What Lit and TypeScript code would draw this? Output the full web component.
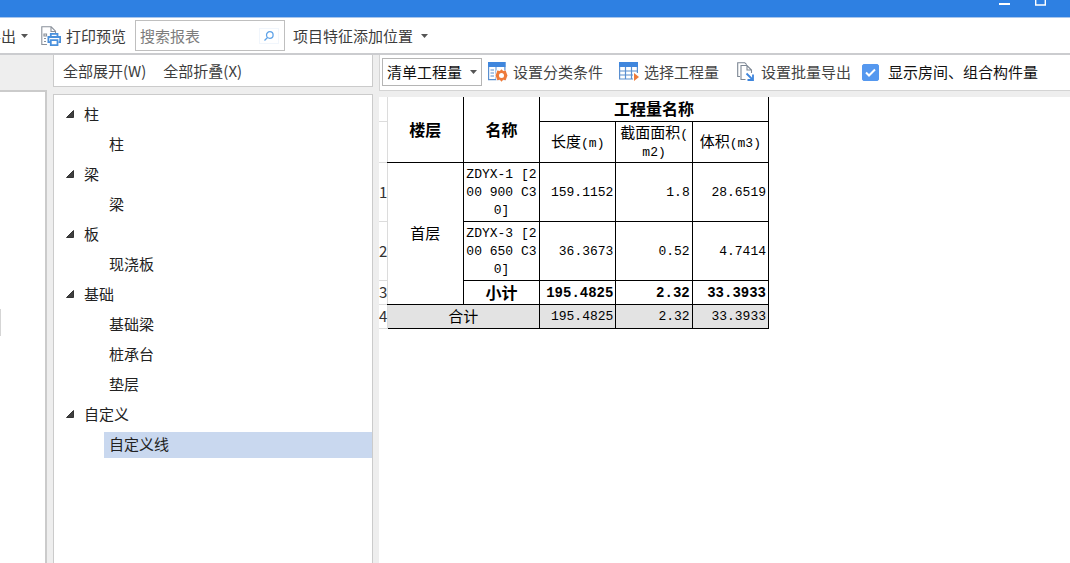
import { LitElement, html, css } from "lit";
import { customElement, state } from "lit/decorators.js";
import { classMap } from "lit/directives/class-map.js";

interface Group {
  name: string;
  items: string[];
}

const GROUPS: Group[] = [
  { name: "柱", items: ["柱"] },
  { name: "梁", items: ["梁"] },
  { name: "板", items: ["现浇板"] },
  { name: "基础", items: ["基础梁", "桩承台", "垫层"] },
  { name: "自定义", items: ["自定义线"] },
];

const caret = html`<svg class="caret" width="7" height="4" viewBox="0 0 7 4" aria-hidden="true">
  <path d="M0 0h7L3.5 4z" fill="#555" />
</svg>`;

const printIcon = html`<svg width="20" height="20" viewBox="0 0 20 20" fill="none" aria-hidden="true">
  <path d="M6 18.5H.8V.8h9.400l4.300 4.400V7M10 1v4.500h4.300" stroke="#8a919b" stroke-width="1.100" />
  <path d="M3 8h2.500v2H3zM3 12.500h2M3 15.500h2" stroke="#8a919b" stroke-width="1.200" />
  <path d="M9.800 11V7.800h6.700V11M9 16.200H7.400V11h11.800v5.200h-1.700" stroke="#4a90dc" stroke-width="1.800" />
  <path d="M9.800 14.200h6.700v4.900H9.800z" fill="#fff" stroke="#4a90dc" stroke-width="1.800" />
</svg>`;

const conditionIcon = html`<svg width="20" height="20" viewBox="0 0 20 20" fill="none" aria-hidden="true">
  <path d="M.6.600h16.300v17H.6z" fill="#fff" stroke="#5a8fd0" stroke-width="1.200" />
  <path d="M0 0h17.500v5H0z" fill="#3f86dd" />
  <path d="M2.500 8h3.500M2.500 11h3.500M2.500 14h3.500" stroke="#5a8fd0" stroke-width="1.200" />
  <path d="M8 5v12.500" stroke="#5a8fd0" />
  <path d="M13.500 6.500l2.200 1.900 3-.2.300 2.900 1 2.400-1 2.400-.3 2.900-3-.2-2.200 1.400-2.200-1.400-3 .2-.3-2.900-1-2.400 1-2.400.3-2.900 3 .2z" fill="#fff" />
  <path d="M13.500 7.200l1.700 1.900 2.500-.5.800 2.500 1 2.400-1 2.400-.8 2.400-2.500-.5-1.700 1.900-1.700-1.900-2.500.5-.8-2.400-1-2.400 1-2.400.8-2.500 2.500.5z" fill="#ee7b3b" />
  <circle cx="13.500" cy="13.500" r="2.500" fill="#fff" />
</svg>`;

const gridIcon = html`<svg width="20" height="20" viewBox="0 0 20 20" fill="none" aria-hidden="true">
  <path d="M.6 1h17.800v16H.6zM6.500 5v12M12.500 5v12M.6 9h17.800M.6 13h17.800" stroke="#5a8fd0" stroke-width="1.200" />
  <path d="M0 0h19v5H0z" fill="#3f86dd" />
  <path d="M14 11h6v8h-6z" fill="#fff" />
  <path d="M15 11l5 4-5 4z" fill="#ee7b3b" />
</svg>`;

const exportIcon = html`<svg width="17" height="20" viewBox="0 0 17 20" fill="none" aria-hidden="true">
  <path d="M3 14.500H.7V.7h7l2 2" stroke="#7d8794" stroke-width="1.100" />
  <path d="M8.500 17.500H4V3.500h6l4.500 4.500v3M10 3.500V8h4.500" stroke="#7d8794" stroke-width="1.100" />
  <path d="M9.500 11.500l5.500 5.500M16 12.500V18h-5.500" stroke="#3f86dd" stroke-width="1.800" />
</svg>`;

@customElement("app-root")
export class AppRoot extends LitElement {
  static styles = css`
    :host {
      display: flex;
      flex-direction: column;
      height: 100vh;
      overflow: hidden;
      background: #eeeeee;
      color: #222;
      font: 15px/20px "Noto Sans CJK SC", sans-serif;
    }
    * {
      box-sizing: border-box;
    }
    button,
    input,
    select {
      font: inherit;
      color: inherit;
      margin: 0;
      padding: 0;
      border: 0;
      border-radius: 0;
      background: none;
    }
    svg {
      display: block;
      flex: none;
    }
    .titlebar {
      display: flex;
      flex: none;
      justify-content: flex-end;
      align-items: flex-start;
      gap: 25px;
      height: 18px;
      padding-right: 24px;
      background: #2e80e2;
      border-bottom: 1px solid #a9c6ec;
    }
    .toolbar {
      display: flex;
      flex: none;
      align-items: center;
      height: 37px;
      color: #3c3c3c;
      background: #fff;
      border-bottom: 2px solid #cbcccf;
      white-space: nowrap;
    }
    .tool {
      display: flex;
      align-items: center;
      gap: 5px;
      white-space: nowrap;
    }
    .export {
      justify-content: flex-end;
      width: 28px;
      overflow: hidden;
    }
    .print {
      margin-left: 13px;
    }
    .search {
      display: flex;
      align-items: center;
      width: 150px;
      height: 31px;
      margin: 0 8px 0 9px;
      padding: 0 5px 0 4px;
      border: 1px solid #bfbfbf;
    }
    .search input {
      flex: 1;
      min-width: 0;
      outline: none;
    }
    .search input::placeholder {
      color: #7d7d7d;
      opacity: 1;
    }
    .find {
      padding: 2px 4px;
      border: 1px solid #f1f6fc;
    }
    .position {
      gap: 8px;
    }
    .work {
      display: flex;
      flex: 1;
      min-height: 0;
    }
    .side {
      width: 47px;
      flex: none;
      margin-top: 35px;
      background: #fff;
      border: 2px solid #cbcbcb;
      border-width: 2px 2px 0 0;
    }
    .handle {
      width: 1px;
      height: 27px;
      margin-top: 217px;
      background: #d5d5d5;
    }
    .nav {
      display: flex;
      flex-direction: column;
      flex: none;
      gap: 7px;
      width: 320px;
      margin: 0 6px;
    }
    .folds {
      display: flex;
      align-items: center;
      gap: 17px;
      height: 32px;
      padding-left: 9px;
      color: #3c3c3c;
      background: #fff;
      border: 1px solid #cbcbcb;
      border-top: 0;
    }
    .tree {
      flex: 1;
      padding-top: 5px;
      background: #fff;
      border: 1px solid #cbcbcb;
      border-bottom: 0;
    }
    .tree ul {
      list-style: none;
      margin: 0;
      padding: 0;
    }
    .group {
      display: flex;
      align-items: center;
      gap: 10px;
      height: 30px;
      padding: 0 0 2px 12px;
    }
    .shut svg {
      transform: rotate(-45deg);
    }
    .row {
      padding: 2px 0 2px 50px;
    }
    .leaf {
      display: block;
      width: 100%;
      height: 26px;
      padding: 0 0 2px 5px;
      text-align: left;
    }
    .picked {
      background: #c9d8ef;
    }
    .main {
      display: flex;
      flex-direction: column;
      flex: 1;
      min-width: 0;
      gap: 6px;
    }
    .options {
      display: flex;
      align-items: center;
      height: 36px;
      padding: 0 0 1px 2px;
      color: #444;
      background: #fff;
      border: 1px solid #d4d4d4;
      border-width: 0 0 1px 1px;
      white-space: nowrap;
      overflow: hidden;
    }
    .picker {
      display: grid;
      align-items: center;
      width: 100px;
      margin-right: 6px;
      color: #111;
    }
    .picker select {
      grid-area: 1 / 1;
      height: 28px;
      padding-left: 4px;
      appearance: none;
      border: 1px solid #b5b5b5;
    }
    .picker svg {
      grid-area: 1 / 1;
      justify-self: end;
      margin-right: 5px;
      pointer-events: none;
    }
    .options .tool {
      margin-right: 16px;
    }
    .options .batch {
      gap: 7px;
      margin: 0 11px 0 2px;
    }
    .check {
      display: flex;
      align-items: center;
      gap: 9px;
      color: #111;
    }
    .check input {
      width: 17px;
      height: 17px;
      appearance: none;
      border: 1px solid #5598ef;
      border-radius: 2px;
      background: #fff;
    }
    .check input:checked {
      background: #5598ef
        url("data:image/svg+xml,%3Csvg xmlns='http://www.w3.org/2000/svg' viewBox='0 0 15 15'%3E%3Cpath d='M3 7.500l3 3 6-6' fill='none' stroke='white' stroke-width='2'/%3E%3C/svg%3E");
    }
    .report {
      flex: 1;
      background: #fff;
      overflow: hidden;
    }
    table {
      table-layout: fixed;
      width: 390px;
      border-collapse: collapse;
      color: #000;
      font: 13px/18px "Liberation Mono", "Noto Sans CJK SC", monospace;
    }
    .numcol {
      width: 8px;
    }
    td,
    th {
      height: 24px;
      padding: 3px 2px 1px;
      border: 1px solid #000;
      font-weight: 400;
      text-align: center;
      line-break: anywhere;
    }
    tr:first-child > .top {
      border-top: 0;
    }
    .num {
      padding: 0;
      border: 1px solid #dcdcdc;
      border-left: 0;
      font: 15px/18px "Noto Sans CJK SC", sans-serif;
      color: #333;
    }
    .edge {
      border-left-color: #dcdcdc;
    }
    .head {
      padding: 5px 2px 0;
      font-size: 16px;
      font-weight: 700;
    }
    .cjk {
      padding: 5px 2px 0;
      font-size: 15px;
    }
    .unit {
      height: 41px;
      padding: 4px 2px 0;
      font-size: 15px;
    }
    .latin {
      font-size: 13px;
    }
    .value {
      text-align: right;
    }
    .strong {
      font-size: 14px;
      font-weight: 700;
    }
    .total > .fill {
      background: #e3e3e3;
    }
  `;

  @state() private picked = "自定义线";
  @state() private closed = new Set<string>();

  private foldAll(close: boolean) {
    this.closed = new Set(close ? GROUPS.map((g) => g.name) : []);
  }

  private toggle(name: string) {
    const next = new Set(this.closed);
    next.has(name) ? next.delete(name) : next.add(name);
    this.closed = next;
  }

  private renderGroup(group: Group) {
    const shut = this.closed.has(group.name);
    return html`<li>
      <button
        class=${classMap({ group: true, shut })}
        aria-expanded=${String(!shut)}
        @click=${() => this.toggle(group.name)}
      >
        <svg width="8" height="8" viewBox="0 0 8 8" aria-hidden="true"><path d="M7.500 .5v7h-7z" fill="#404040" stroke="#333" /></svg>
        ${group.name}
      </button>
      ${shut
        ? null
        : html`<ul>
            ${group.items.map(
              (item) => html`<li class="row">
                <button
                  class=${classMap({ leaf: true, picked: item === this.picked })}
                  @click=${() => (this.picked = item)}
                >
                  ${item}
                </button>
              </li>`,
            )}
          </ul>`}
    </li>`;
  }

  private renderTable() {
    return html`<table>
      <colgroup>
        <col class="numcol" />
        <col /><col /><col /><col /><col />
      </colgroup>
      <thead>
        <tr>
          <td class="num top"></td>
          <th class="head top edge" rowspan="2">楼层</th>
          <th class="head top" rowspan="2">名称</th>
          <th class="head top" colspan="3">工程量名称</th>
        </tr>
        <tr>
          <td class="num"></td>
          <th class="unit">长度<span class="latin">(m)</span></th>
          <th class="unit">截面面积<span class="latin">(m2)</span></th>
          <th class="unit">体积<span class="latin">(m3)</span></th>
        </tr>
      </thead>
      <tbody>
        <tr>
          <th class="num">1</th>
          <th class="cjk edge" rowspan="3">首层</th>
          <td>ZDYX-1 [200 900 C30]</td>
          <td class="value">159.1152</td>
          <td class="value">1.8</td>
          <td class="value">28.6519</td>
        </tr>
        <tr>
          <th class="num">2</th>
          <td>ZDYX-3 [200 650 C30]</td>
          <td class="value">36.3673</td>
          <td class="value">0.52</td>
          <td class="value">4.7414</td>
        </tr>
        <tr>
          <th class="num">3</th>
          <th class="head">小计</th>
          <td class="value strong">195.4825</td>
          <td class="value strong">2.32</td>
          <td class="value strong">33.3933</td>
        </tr>
        <tr class="total">
          <th class="num">4</th>
          <th class="cjk edge fill" colspan="2">合计</th>
          <td class="value fill">195.4825</td>
          <td class="value fill">2.32</td>
          <td class="value fill">33.3933</td>
        </tr>
      </tbody>
    </table>`;
  }

  render() {
    return html`
      <header class="titlebar">
        <button aria-label="最小化">
          <svg width="11" height="6" viewBox="0 0 11 6"><path d="M0 4h11" stroke="#fff" stroke-width="2" /></svg>
        </button>
        <button aria-label="最大化">
          <svg width="11" height="6" viewBox="0 0 11 6"><path d="M.7-4v9h9.600v-9z" fill="none" stroke="#fff" stroke-width="1.400" /></svg>
        </button>
      </header>
      <nav class="toolbar">
        <button class="tool export">导出 ${caret}</button>
        <button class="tool print">${printIcon} 打印预览</button>
        <div class="search">
          <input type="text" aria-label="搜索报表" placeholder="搜索报表" />
          <button class="find" aria-label="搜索">
            <svg width="10" height="10" viewBox="0 0 10 10" fill="none" stroke="#5fa3e8" stroke-width="1.300">
              <circle cx="5.800" cy="4" r="3.300" /><path d="M3.500 6.500L.5 9.500" />
            </svg>
          </button>
        </div>
        <button class="tool position">项目特征添加位置 ${caret}</button>
      </nav>
      <div class="work">
        <aside class="side"><div class="handle"></div></aside>
        <section class="nav">
          <div class="folds">
            <button @click=${() => this.foldAll(false)}>全部展开(W)</button>
            <button @click=${() => this.foldAll(true)}>全部折叠(X)</button>
          </div>
          <div class="tree"><ul>${GROUPS.map((g) => this.renderGroup(g))}</ul></div>
        </section>
        <main class="main">
          <div class="options">
            <div class="picker">
              <select aria-label="工程量类型"><option>清单工程量</option></select>
              ${caret}
            </div>
            <button class="tool">${conditionIcon} 设置分类条件</button>
            <button class="tool">${gridIcon} 选择工程量</button>
            <button class="tool batch">${exportIcon} 设置批量导出</button>
            <label class="check"><input type="checkbox" checked />显示房间、组合构件量</label>
          </div>
          <div class="report">${this.renderTable()}</div>
        </main>
      </div>
    `;
  }
}
